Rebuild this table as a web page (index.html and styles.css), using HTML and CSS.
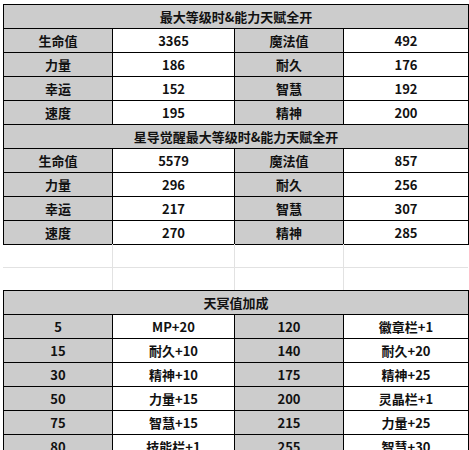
FILE: index.html
```html
<!DOCTYPE html>
<html>
<head>
<meta charset="utf-8">
<link rel="stylesheet" href="styles.css">
</head>
<body>
<div class="sheet">
  <table class="stats">
    <colgroup><col class="c1"><col class="c2"><col class="c3"><col class="c4"></colgroup>
    <tr><td class="head" colspan="4">最大等级时&amp;能力天赋全开</td></tr>
    <tr><td class="lab">生命值</td><td>3365</td><td class="lab">魔法值</td><td>492</td></tr>
    <tr><td class="lab">力量</td><td>186</td><td class="lab">耐久</td><td>176</td></tr>
    <tr><td class="lab">幸运</td><td>152</td><td class="lab">智慧</td><td>192</td></tr>
    <tr><td class="lab">速度</td><td>195</td><td class="lab">精神</td><td>200</td></tr>
    <tr><td class="head" colspan="4">星导觉醒最大等级时&amp;能力天赋全开</td></tr>
    <tr><td class="lab">生命值</td><td>5579</td><td class="lab">魔法值</td><td>857</td></tr>
    <tr><td class="lab">力量</td><td>296</td><td class="lab">耐久</td><td>256</td></tr>
    <tr><td class="lab">幸运</td><td>217</td><td class="lab">智慧</td><td>307</td></tr>
    <tr><td class="lab">速度</td><td>270</td><td class="lab">精神</td><td>285</td></tr>
  </table>
  <table class="grid">
    <colgroup><col class="c1"><col class="c2"><col class="c3"><col class="c4"></colgroup>
    <tr><td></td><td></td><td></td><td></td></tr>
    <tr><td></td><td></td><td></td><td></td></tr>
  </table>
  <table class="stats">
    <colgroup><col class="c1"><col class="c2"><col class="c3"><col class="c4"></colgroup>
    <tr><td class="head" colspan="4">天冥值加成</td></tr>
    <tr><td class="lab">5</td><td>MP+20</td><td class="lab">120</td><td>徽章栏+1</td></tr>
    <tr><td class="lab">15</td><td>耐久+10</td><td class="lab">140</td><td>耐久+20</td></tr>
    <tr><td class="lab">30</td><td>精神+10</td><td class="lab">175</td><td>精神+25</td></tr>
    <tr><td class="lab">50</td><td>力量+15</td><td class="lab">200</td><td>灵晶栏+1</td></tr>
    <tr><td class="lab">75</td><td>智慧+15</td><td class="lab">215</td><td>力量+25</td></tr>
    <tr><td class="lab">80</td><td>技能栏+1</td><td class="lab">255</td><td>智慧+30</td></tr>
  </table>
</div>
</body>
</html>
```
FILE: styles.css
```css
html, body {
  margin: 0;
  padding: 0;
  background: #ffffff;
}
.sheet {
  padding: 4px 0 0 3px;
  width: 466px;
  overflow: hidden;
}
table {
  border-collapse: collapse;
  table-layout: fixed;
  width: 465px;
}
.c1 { width: 109px; }
.c2 { width: 122px; }
.c3 { width: 109px; }
.c4 { width: 125px; }
.stats td {
  border: 1px solid #000;
  height: 23px;
  padding: 0;
  text-align: center;
  vertical-align: middle;
  font-family: "Noto Sans CJK SC", "Noto Sans", sans-serif;
  font-weight: bold;
  font-size: 13px;
  line-height: 16px;
  color: #111;
  background: #fff;
}
.stats td.head,
.stats td.lab {
  background: #cccccc;
}
.grid {
  margin: -1px 0;
}
.grid td {
  border: 1px solid #e2e2e2;
  border-top: none;
  height: 23px;
  padding: 0;
}
.grid tr:last-child td {
  border-bottom: none;
}
.grid td:first-child {
  border-left: none;
}
.grid td:last-child {
  border-right: none;
}
```
